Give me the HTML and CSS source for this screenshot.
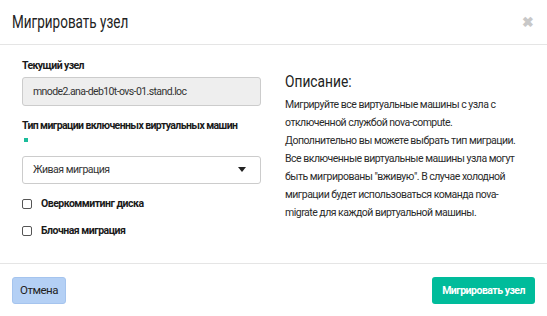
FILE: index.html
```html
<!DOCTYPE html>
<html lang="ru">

<head>
    <meta charset="UTF-8">
    <meta name="viewport" content="width=device-width, initial-scale=1.0">
    <title>Мигрировать узел</title>
    <link rel="stylesheet" href="styles.css">
</head>

<body>
    <div class="modal">
        <!-- Header -->
        <div class="modal-header">
            <h3 class="modal-title">Мигрировать узел</h3>
            <span class="close">&#10006;</span>
        </div>

        <!-- Body -->
        <div class="modal-body">
            <div class="left">
                <label class="field-label">Текущий узел</label>
                <div class="input readonly">mnode2.ana-deb10t-ovs-01.stand.loc</div>

                <label class="field-label">Тип миграции включенных виртуальных машин</label>
                <span class="required"></span>
                <div class="input select">
                    <span>Живая миграция</span>
                    <span class="caret"></span>
                </div>

                <label class="check"><span class="box"></span>Оверкоммитинг диска</label>
                <label class="check"><span class="box"></span>Блочная миграция</label>
            </div>

            <div class="right">
                <h3>Описание:</h3>
                <p>Мигрируйте все виртуальные машины с узла с отключенной службой nova-compute. Дополнительно вы можете выбрать тип миграции. Все включенные виртуальные машины узла могут быть мигрированы "вживую". В случае холодной миграции будет использоваться команда nova-migrate для каждой виртуальной машины.</p>
            </div>
        </div>

        <!-- Footer -->
        <div class="modal-footer">
            <a href="#" class="btn btn-cancel">Отмена</a>
            <a href="#" class="btn btn-primary">Мигрировать узел</a>
        </div>
    </div>
</body>

</html>
```

FILE: styles.css
```css
body {
    margin: 0;
    font-family: Roboto, sans-serif;
    font-size: 10.5px;
    letter-spacing: -0.5px;
    color: #333;
    background-color: #fff;
}

.modal {
    width: 547px;
    height: 316px;
    display: flex;
    flex-direction: column;
}

/* Header */
.modal-header {
    display: flex;
    justify-content: space-between;
    align-items: center;
    height: 44px;
    padding: 0 12px;
    border-bottom: 1px solid #e5e5e5;
}

.modal-title {
    margin: 0;
    font-size: 18px;
    font-weight: normal;
    letter-spacing: 0;
    color: #222;
    transform: scaleX(0.75);
    transform-origin: left center;
}

.close {
    color: #c8c8c8;
    font-size: 14px;
    font-weight: bold;
    margin-right: 2px;
}

/* Body */
.modal-body {
    display: flex;
    gap: 24px;
    padding: 14px 22px 0 22px;
    height: 205px;
}

.left {
    width: 239px;
    display: flex;
    flex-direction: column;
}

.field-label {
    font-weight: bold;
    letter-spacing: -0.6px;
    color: #1a1a1a;
    margin-bottom: 5px;
    white-space: nowrap;
}

.input {
    height: 26px;
    border: 1px solid #ccc;
    border-radius: 3px;
    padding: 0 10px;
    display: flex;
    align-items: center;
    box-sizing: border-box;
    margin-bottom: 13px;
}

.readonly {
    background-color: #eee;
    height: 29px;
    letter-spacing: -0.6px;
}

.required {
    width: 4px;
    height: 4px;
    background-color: #1bbc9b;
    margin: 1px 0 14px 2px;
}

.select {
    height: 28px;
    justify-content: space-between;
    margin-bottom: 13px;
}

.caret {
    border-top: 5px solid #222;
    border-left: 4px solid transparent;
    border-right: 4px solid transparent;
    margin-right: 4px;
}

.check {
    display: flex;
    align-items: center;
    font-weight: bold;
    color: #1a1a1a;
    height: 16px;
    margin-bottom: 12px;
    margin-top: -1px;
}

.check .box {
    width: 8px;
    height: 8px;
    border: 1px solid #555;
    border-radius: 2px;
    margin-right: 9px;
}

.right {
    flex: 1;
}

.right h3 {
    margin: 12px 0 5px 0;
    font-size: 17px;
    font-weight: normal;
    letter-spacing: 0;
    color: #222;
    transform: scaleX(0.81);
    transform-origin: left center;
}

.right p {
    margin: 0;
    line-height: 18px;
    color: #2b2b2b;
}

/* Footer */
.modal-footer {
    display: flex;
    justify-content: space-between;
    align-items: center;
    border-top: 1px solid #e5e5e5;
    padding: 0 12px 0 12px;
    height: 52px;
}

.btn {
    display: inline-block;
    height: 27px;
    line-height: 27px;
    padding: 0 10px;
    border-radius: 3px;
    text-decoration: none;
    box-sizing: border-box;
}

.btn-cancel {
    background-color: #b4d0f5;
    border: 1px solid #a5c4ee;
    color: #222;
    line-height: 25px;
    padding: 0 7px;
    font-size: 11.5px;
}

.btn-primary {
    background-color: #00bc9b;
    color: #fff;
    font-weight: bold;
}
```
